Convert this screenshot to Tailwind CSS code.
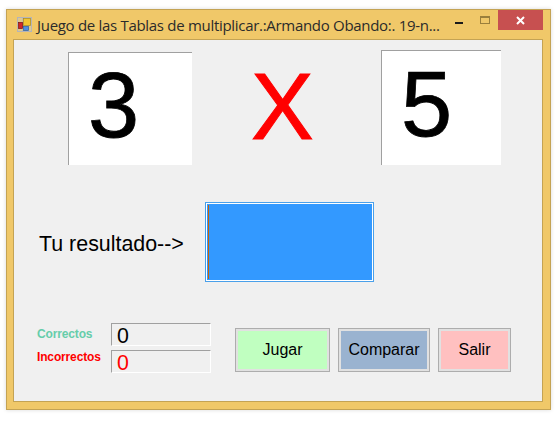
<!doctype html>
<html>
<head>
<meta charset="utf-8">
<script src="https://cdn.jsdelivr.net/npm/@tailwindcss/browser@4"></script>
</head>
<body class="bg-white m-0 overflow-hidden font-['Liberation_Sans',sans-serif]">
<div class="w-[560px] h-[423px] pt-[9px] pl-[6px]">
  <div class="w-[545px] h-[401px] bg-[#f0c869] border border-[#c4a354] shadow-[0_0_4px_rgba(0,0,0,0.15)] flex flex-col">
    <div class="h-[29px] flex items-start shrink-0 pl-[10px]">
      <svg class="w-[15px] h-[15px] mt-[7px] shrink-0" viewBox="0 0 15 15">
        <rect x="0.5" y="0.5" width="14" height="14" fill="#e0c88a" stroke="#b4b4b8"/>
        <path d="M0.5 5.5H5.5V0.5M5.5 12.5V14.5M5.5 8.5H14.5" fill="none" stroke="#b4b4b8" stroke-width="0.6"/>
        <rect x="6.5" y="1.5" width="7" height="7" fill="#f2c531" stroke="#a88a20" stroke-width="0.7"/>
        <rect x="1.5" y="5.5" width="4" height="6" fill="#d0262a" stroke="#7a1010" stroke-width="0.7"/>
        <rect x="6.5" y="9.5" width="5" height="4" fill="#4d8fe0" stroke="#2a5ea8" stroke-width="0.7"/>
      </svg>
      <div class="ml-[5px] mt-[4px] w-[414px] whitespace-nowrap text-[15px] leading-[22px] text-[#2b2b2b] font-['Open_Sans',sans-serif] tracking-[-0.3px] shrink-0">Juego de las Tablas de multiplicar.:Armando Obando:. 19-n...</div>
      <div class="w-[8px] h-[2px] bg-[#1a1a1a] mt-[12px] ml-[4px] shrink-0"></div>
      <div class="w-[10px] h-[8px] border border-[#9a7f3c] border-t-2 mt-[6px] ml-[17px] shrink-0"></div>
      <div class="w-[45px] h-[20px] bg-[#c75050] ml-[8px] flex items-center justify-center shrink-0">
        <svg class="w-[9px] h-[9px]" viewBox="0 0 9 9"><path d="M1 1L8 8M8 1L1 8" stroke="#fff" stroke-width="2"/></svg>
      </div>
    </div>
    <div class="w-[530px] h-[363px] ml-[6px] bg-[#f0f0f0] border border-[#c4a354] flex flex-col">
      <div class="flex items-start pl-[54px] h-[125px] shrink-0">
        <div class="mt-[12px] w-[124px] h-[113px] bg-white border-t border-l border-[#a0a0a0] text-[92px] leading-[105px] pl-[19px] text-black [-webkit-text-stroke:0.8px_#000] shrink-0">3</div>
        <div class="ml-[59px] mt-[12px] w-[70px] text-[94px] leading-[110px] text-[#ff0000] [-webkit-text-stroke:1px_#ff0000] shrink-0">X</div>
        <div class="ml-[60px] mt-[10px] w-[120px] h-[115px] bg-white border-t border-l border-[#a0a0a0] text-[92px] leading-[107px] pl-[19px] text-black [-webkit-text-stroke:0.8px_#000] shrink-0">5</div>
      </div>
      <div class="flex items-start mt-[37px] pl-[25px] h-[80px] shrink-0">
        <div class="w-[166px] mt-[30px] text-[21.4px] leading-[24px] text-black whitespace-nowrap shrink-0">Tu resultado--&gt;</div>
        <div class="w-[169px] h-[80px] bg-[#3399ff] border border-[#4aa0ea] outline outline-white -outline-offset-2 shrink-0 pl-[2px] pt-[2px]">
          <div class="w-[1px] h-[74px] bg-[#cc6600]"></div>
        </div>
      </div>
      <div class="flex items-start mt-[41px] pl-[23px]">
        <div class="w-[74px] shrink-0 flex flex-col mt-[5px]">
          <div class="text-[12px] leading-[13px] font-bold text-[#66cdaa] tracking-[-0.15px]">Correctos</div>
          <div class="mt-[10px] text-[12px] leading-[13px] font-bold text-[#ff0000] tracking-[-0.15px]">Incorrectos</div>
        </div>
        <div class="w-[100px] shrink-0 flex flex-col gap-[4px]">
          <div class="h-[23px] bg-[#f0f0f0] border-t border-l border-[#a0a0a0] border-r border-b border-r-white border-b-white text-[21.33px] leading-[20px] pt-[2px] pl-[5px] text-black">0</div>
          <div class="h-[23px] bg-[#f0f0f0] border-t border-l border-[#a0a0a0] border-r border-b border-r-white border-b-white text-[21.33px] leading-[20px] pt-[2px] pl-[5px] text-[#ff0000]">0</div>
        </div>
        <div class="flex items-start gap-[8px] ml-[24px] mt-[5px] text-[16px] text-black shrink-0">
          <div class="w-[95px] h-[44px] border border-[#adadad] bg-[#e1e1e1] p-[2px]"><div class="w-full h-full bg-[#c0ffc0] flex items-center justify-center">Jugar</div></div>
          <div class="w-[92px] h-[44px] border border-[#adadad] bg-[#e1e1e1] p-[2px]"><div class="w-full h-full bg-[#9ab3d0] flex items-center justify-center">Comparar</div></div>
          <div class="w-[73px] h-[44px] border border-[#adadad] bg-[#e1e1e1] p-[2px]"><div class="w-full h-full bg-[#ffc0c0] flex items-center justify-center">Salir</div></div>
        </div>
      </div>
    </div>
  </div>
</div>
</body>
</html>
